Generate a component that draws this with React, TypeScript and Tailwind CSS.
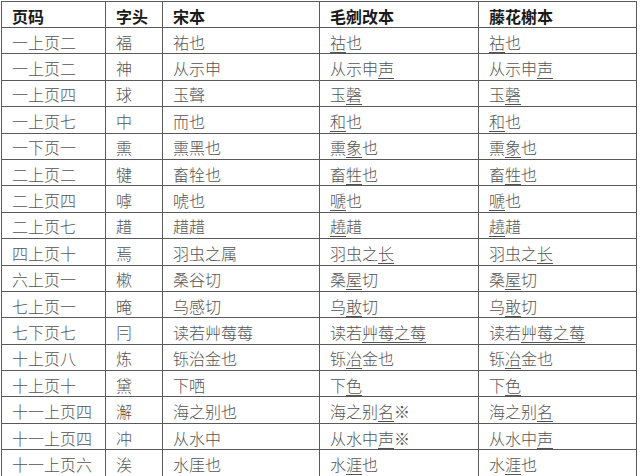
import React from 'react';

// [x] marks a character that is underlined in the collation
const rows: string[][] = [
  ['一上页二', '福', '祐也', '[祜]也', '[祜]也'],
  ['一上页二', '神', '从示申', '从示申[声]', '从示申[声]'],
  ['一上页四', '球', '玉聲', '玉[磬]', '玉[磬]'],
  ['一上页七', '中', '而也', '[和]也', '[和]也'],
  ['一下页一', '熏', '熏黑也', '熏[象]也', '熏[象]也'],
  ['二上页二', '犍', '畜牷也', '畜[牲]也', '畜[牲]也'],
  ['二上页四', '嘑', '唬也', '[嗁]也', '[嗁]也'],
  ['二上页七', '趞', '趞趞', '[趬]趞', '[趬]趞'],
  ['四上页十', '焉', '羽虫之属', '羽虫之[长]', '羽虫之[长]'],
  ['六上页一', '樕', '桑谷切', '桑[屋]切', '桑[屋]切'],
  ['七上页一', '晻', '乌感切', '乌[敢]切', '乌[敢]切'],
  ['七下页七', '冃', '读若艸莓莓', '读若[艸莓之莓]', '读若[艸莓之莓]'],
  ['十上页八', '炼', '铄治金也', '铄[冶]金也', '铄[冶]金也'],
  ['十上页十', '黛', '下哂', '下[色]', '下[色]'],
  ['十一上页四', '澥', '海之别也', '海之别[名]※', '海之别[名]'],
  ['十一上页四', '冲', '从水中', '从水中[声]※', '从水中[声]'],
  ['十一上页六', '涘', '水厓也', '水[涯]也', '水[涯]也'],
];

const headers = ['页码', '字头', '宋本', '毛剜改本', '藤花榭本'];

const Marked = ({ text }: { text: string }) => {
  const parts = text.split(/(\[[^\]]+\])/).filter(Boolean);
  return (
    <>
      {parts.map((p, i) =>
        p.startsWith('[') ? (
          <span key={i} className="underline decoration-1 underline-offset-[3px]">
            {p.slice(1, -1)}
          </span>
        ) : (
          <span key={i}>{p}</span>
        )
      )}
    </>
  );
};

export default function App() {
  return (
    <div
      className="w-[640px] h-[476px] overflow-hidden bg-white pl-[1px] pt-[1px]"
      style={{ fontFamily: '"Noto Sans CJK SC", sans-serif' }}
    >
      <table className="table-fixed border-collapse w-[635px] text-[16px] leading-none">
        <colgroup>
          <col className="w-[104px]" />
          <col className="w-[57px]" />
          <col className="w-[157px]" />
          <col className="w-[159px]" />
          <col className="w-[158px]" />
        </colgroup>
        <thead>
          <tr className="h-[26px]">
            {headers.map((h) => (
              <th
                key={h}
                className="border border-[#5a5a5a] pl-[10px] pt-[2px] text-left font-semibold text-[#1a1a1a]"
              >
                {h}
              </th>
            ))}
          </tr>
        </thead>
        <tbody>
          {rows.map((r, i) => (
            <tr key={i} className="h-[26.4px]">
              {r.map((c, j) => (
                <td
                  key={j}
                  className="border border-[#5a5a5a] pl-[10px] pt-[2px] font-light text-[#555555] whitespace-nowrap"
                >
                  <Marked text={c} />
                </td>
              ))}
            </tr>
          ))}
        </tbody>
      </table>
    </div>
  );
}
